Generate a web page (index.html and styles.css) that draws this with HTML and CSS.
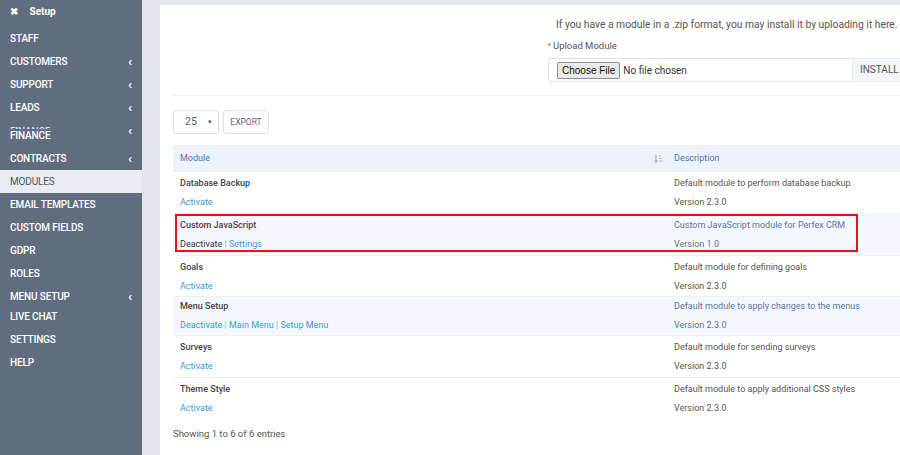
FILE: index.html
```html
<!DOCTYPE html>
<html lang="en">

<head>
    <meta charset="UTF-8">
    <title>Modules</title>
    <link rel="stylesheet" href="styles.css">
</head>

<body>
    <aside class="sidebar">
        <div class="side-head"><span class="close-x">&#10006;</span> Setup</div>
        <ul class="side-menu">
            <li>STAFF</li>
            <li>CUSTOMERS <span class="chev">&lsaquo;</span></li>
            <li>SUPPORT <span class="chev">&lsaquo;</span></li>
            <li>LEADS <span class="chev">&lsaquo;</span></li>
            <li class="finance"><span class="ghost">FINANCE</span>FINANCE <span class="chev">&lsaquo;</span></li>
            <li>CONTRACTS <span class="chev">&lsaquo;</span></li>
            <li class="active">MODULES</li>
            <li>EMAIL TEMPLATES</li>
            <li>CUSTOM FIELDS</li>
            <li>GDPR</li>
            <li>ROLES</li>
            <li class="short">MENU SETUP <span class="chev">&lsaquo;</span></li>
            <li>LIVE CHAT</li>
            <li>SETTINGS</li>
            <li>HELP</li>
        </ul>
    </aside>

    <main class="content">
        <div class="panel">
            <div class="upload">
                <p class="upload-note">If you have a module in a .zip format, you may install it by uploading it here.</p>
                <label class="upload-label"><span class="req">*</span>Upload Module</label>
                <div class="input-group">
                    <div class="file-field">
                        <span class="file-btn">Choose File</span>
                        <span class="file-name">No file chosen</span>
                    </div>
                    <span class="addon">INSTALL</span>
                </div>
            </div>

            <div class="tools">
                <div class="select-box">25 <span class="caret">&#9662;</span></div>
                <button class="btn-export">EXPORT</button>
            </div>

            <div class="table-wrap">
                <table class="modules">
                    <thead>
                        <tr>
                            <th class="col-module">Module
                                <svg class="sort-ico" width="10" height="10" viewBox="0 0 10 10">
                                    <path d="M2 1v7M0.5 6.5L2 8.5L3.5 6.5" stroke="#9aa5b4" stroke-width="1" fill="none" />
                                    <path d="M5 2h2M5 4.5h3M5 7h4.5" stroke="#b8c0cc" stroke-width="1" />
                                </svg>
                            </th>
                            <th>Description</th>
                        </tr>
                    </thead>
                    <tbody>
                        <tr>
                            <td><div class="title">Database Backup</div><a href="#">Activate</a></td>
                            <td><div>Default module to perform database backup</div><div>Version 2.3.0</div></td>
                        </tr>
                        <tr class="hl">
                            <td><div class="title">Custom JavaScript</div><span class="dark">Deactivate</span> <span class="sep">|</span> <a href="#">Settings</a></td>
                            <td><div>Custom JavaScript module for Perfex CRM</div><div>Version 1.0</div></td>
                        </tr>
                        <tr class="tight">
                            <td><div class="title">Goals</div><a href="#">Activate</a></td>
                            <td><div>Default module for defining goals</div><div>Version 2.3.0</div></td>
                        </tr>
                        <tr class="hl flat">
                            <td><div class="title">Menu Setup</div><a href="#">Deactivate</a> <span class="sep">|</span> <a href="#">Main Menu</a> <span class="sep">|</span> <a href="#">Setup Menu</a></td>
                            <td><div>Default module to apply changes to the menus</div><div>Version 2.3.0</div></td>
                        </tr>
                        <tr>
                            <td><div class="title">Surveys</div><a href="#">Activate</a></td>
                            <td><div>Default module for sending surveys</div><div>Version 2.3.0</div></td>
                        </tr>
                        <tr>
                            <td><div class="title">Theme Style</div><a href="#">Activate</a></td>
                            <td><div>Default module to apply additional CSS styles</div><div>Version 2.3.0</div></td>
                        </tr>
                    </tbody>
                </table>
                <div class="mark"></div>
            </div>

            <p class="info">Showing 1 to 6 of 6 entries</p>
        </div>
    </main>
</body>

</html>
```

FILE: styles.css
```css
body {
    margin: 0;
    background-color: #e3e7ec;
    font-family: Roboto, "Liberation Sans", sans-serif;
    display: flex;
    height: 455px;
    overflow: hidden;
}

/* sidebar */
.sidebar {
    width: 142px;
    flex-shrink: 0;
    background-color: #5f6d7f;
    color: #fff;
}

.side-head {
    height: 27px;
    box-sizing: border-box;
    padding: 4px 0 0 10px;
    line-height: 15px;
    font-size: 10px;
    font-weight: 700;
}

.close-x {
    font-size: 10px;
    margin-right: 9px;
}

.side-menu {
    list-style: none;
    margin: 0;
    padding: 0;
}

.side-menu li {
    position: relative;
    height: 23px;
    line-height: 23px;
    padding-left: 10px;
    font-size: 10px;
    font-weight: 500;
    letter-spacing: -0.15px;
}

.side-menu li.finance {
    height: 28px;
    box-sizing: border-box;
    padding-top: 5px;
}

.side-menu li.short {
    height: 20px;
}

.side-menu li.active {
    background-color: #e9edf1;
    color: #4a5361;
    font-weight: 400;
}

.ghost {
    position: absolute;
    left: 10px;
    top: 8px;
    height: 2px;
    overflow: hidden;
    line-height: 9px;
    opacity: 0.8;
}

.chev {
    position: absolute;
    right: 10px;
    top: 0;
    font-size: 13px;
    font-weight: 700;
}

/* main */
.content {
    flex: 1;
    padding: 5px 0 0 18px;
    min-width: 0;
}

.panel {
    background-color: #fff;
    height: 100%;
    width: 780px;
    color: #555;
}

.upload {
    margin-left: 12px;
    padding: 12px 0 13px 376px;
    border-bottom: 1px solid #eceff3;
}

.upload-note {
    margin: 0 0 7px 8px;
    font-size: 10.3px;
    line-height: 16px;
    color: #555;
    white-space: nowrap;
}

.upload-label {
    display: block;
    font-size: 9.5px;
    line-height: 12px;
    color: #555;
}

.req {
    color: #fc2d42;
    font-size: 7px;
    margin-right: 2px;
    vertical-align: 1px;
}

.input-group {
    display: flex;
    margin-top: 6px;
    height: 24px;
}

.file-field {
    width: 304px;
    border: 1px solid #dfe3e8;
    border-right: none;
    border-radius: 2px 0 0 2px;
    display: flex;
    align-items: center;
    padding-left: 8px;
    box-sizing: border-box;
}

.file-btn {
    font-family: "Liberation Sans", Arial, sans-serif;
    font-size: 10px;
    color: #111;
    background-color: #e9e9e9;
    border: 1px solid #8f8f8f;
    border-radius: 2px;
    padding: 1px 4px;
    line-height: 13px;
}

.file-name {
    font-size: 10px;
    color: #333;
    margin-left: 3px;
}

.addon {
    flex: 1;
    background-color: #f3f5f8;
    border: 1px solid #e6e9ee;
    font-size: 10px;
    line-height: 22px;
    padding-left: 7px;
    color: #555;
}

/* table tools */
.tools {
    display: flex;
    gap: 4px;
    margin: 14px 0 0 13px;
}

.select-box {
    width: 46px;
    height: 24px;
    box-sizing: border-box;
    border: 1px solid #dfe3e8;
    border-radius: 3px;
    font-size: 10.5px;
    line-height: 22px;
    padding-left: 11px;
    color: #4b5a70;
    position: relative;
}

.caret {
    position: absolute;
    right: 6px;
    top: 0;
    font-size: 7px;
}

.btn-export {
    width: 46px;
    height: 24px;
    background: #fff;
    border: 1px solid #dfe3e8;
    border-radius: 3px;
    font-family: Roboto, sans-serif;
    font-size: 8.5px;
    color: #5d6a80;
    padding: 0;
}

.table-wrap {
    position: relative;
    margin: 11px 0 0 13px;
}

.modules {
    width: 100%;
    border-collapse: collapse;
    font-size: 9px;
}

.modules th {
    background-color: #edf3fa;
    height: 26px;
    text-align: left;
    font-weight: 400;
    color: #5874a4;
    padding: 0 7px;
}

.modules th.col-module {
    width: 480px;
    position: relative;
}

.sort-ico {
    position: absolute;
    right: 3px;
    top: 9px;
}

.modules td {
    padding: 2px 7px 1px;
    line-height: 19px;
    border-top: 1px solid #eef1f4;
    vertical-align: top;
    color: #555;
}

.modules tr.tight td {
    padding-bottom: 0;
}

.modules tr.flat td {
    padding-top: 0;
    padding-bottom: 0;
}

.modules tr.hl td {
    background-color: #f4f8fd;
}

.modules tr.hl td:last-child {
    color: #58759d;
}

.title {
    color: #444;
    font-weight: 500;
}

.modules a {
    color: #3b98d6;
    text-decoration: none;
}

.dark {
    color: #333;
}

.sep {
    color: #9aa;
}

.mark {
    position: absolute;
    left: 2px;
    top: 69px;
    width: 683px;
    height: 38px;
    border: 2px solid #e3131d;
    box-sizing: border-box;
}

.info {
    margin: 9px 0 0 13px;
    font-size: 9.5px;
    color: #555;
}
```
